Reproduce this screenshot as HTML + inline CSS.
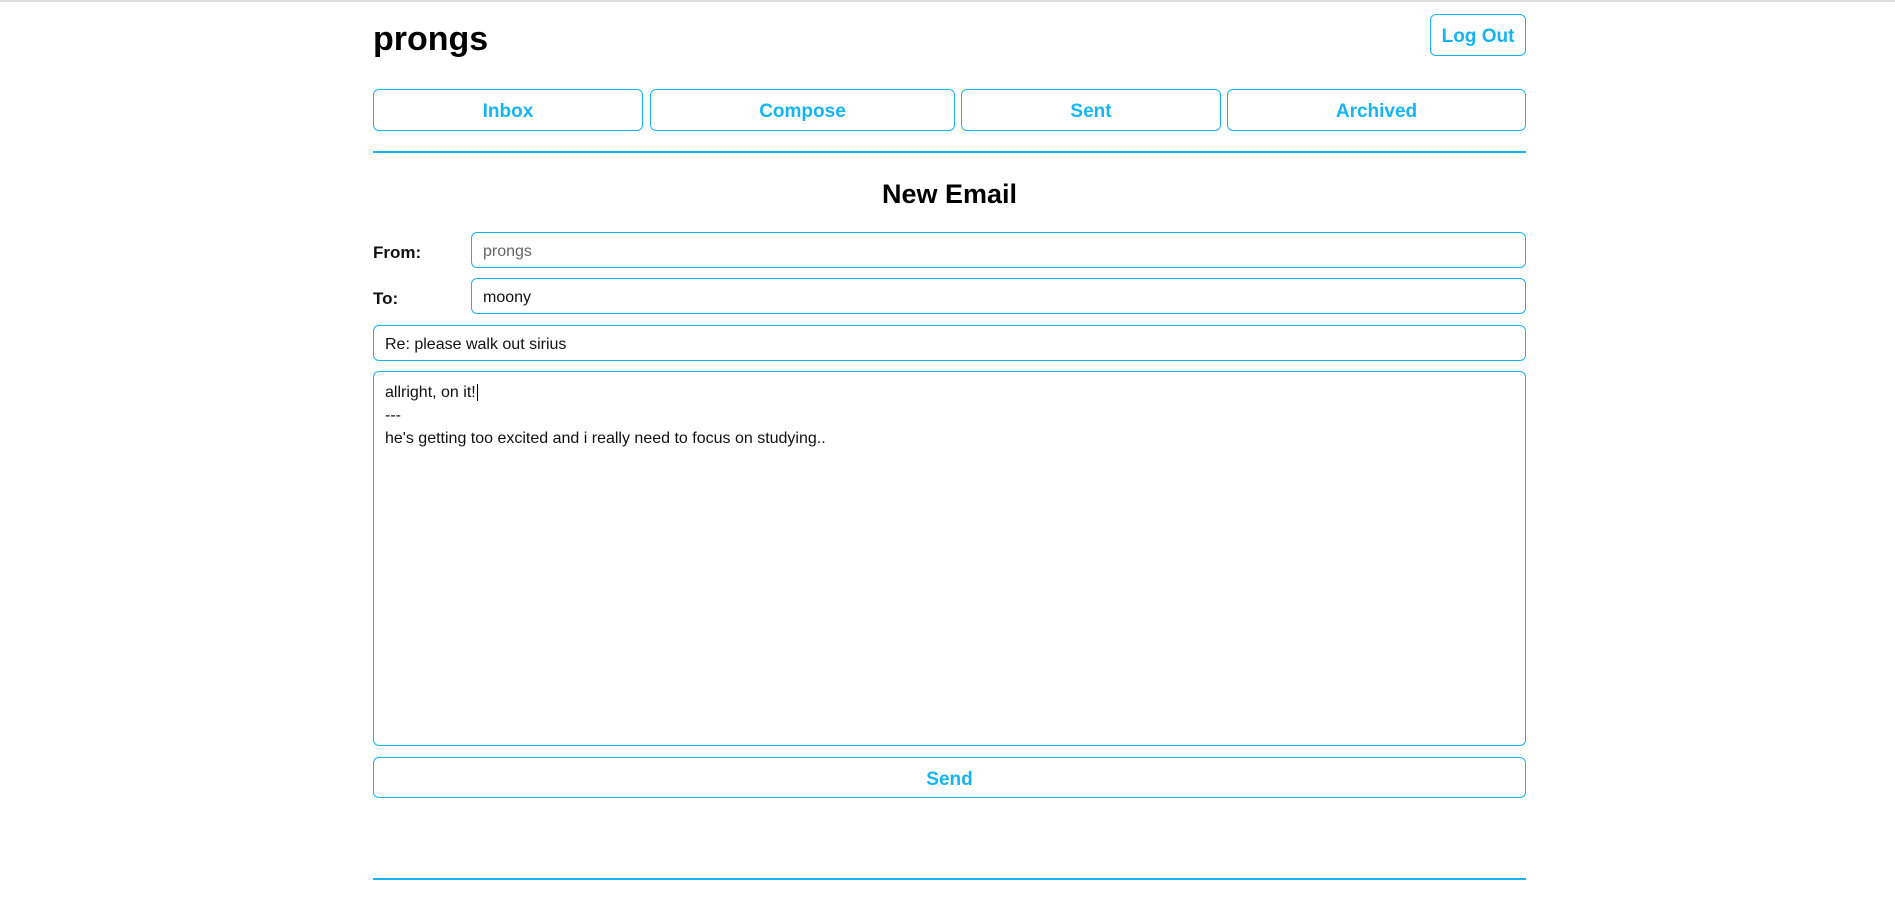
<!DOCTYPE html>
<html><head><style>
*{box-sizing:border-box;margin:0;padding:0}
body{width:1895px;height:900px;background:#fff;font-family:"Liberation Sans",sans-serif;position:relative;overflow:hidden}
.a{position:absolute}
.btn{position:absolute;border:1.5px solid #16b4f5;border-radius:6px;color:#16b4f5;font-size:19px;font-weight:bold;display:flex;align-items:center;justify-content:center;background:#fff;padding-top:4px}
.inp{position:absolute;border:1.5px solid #16b4f5;border-radius:6px;font-size:16px;padding-left:11px;padding-top:3px;display:flex;align-items:center;color:#111}
.lbl{position:absolute;font-size:17px;font-weight:bold;color:#111}
.hr{position:absolute;left:373px;width:1153px;height:1.5px;background:#16b4f5}
</style></head><body>
<div class="a" style="left:0;top:0;width:1895px;height:2px;background:#ddd"></div>
<div class="a" style="left:373px;top:20px;font-size:34px;font-weight:bold;color:#000">prongs</div>
<div class="btn" style="left:1430px;top:14px;width:96px;height:42px;font-size:19px">Log Out</div>
<div class="btn" style="left:373px;top:89px;width:270px;height:42px">Inbox</div>
<div class="btn" style="left:650px;top:89px;width:305px;height:42px">Compose</div>
<div class="btn" style="left:961px;top:89px;width:260px;height:42px">Sent</div>
<div class="btn" style="left:1227px;top:89px;width:299px;height:42px">Archived</div>
<div class="hr" style="top:151px"></div>
<div class="a" style="left:373px;width:1153px;top:179px;text-align:center;font-size:27px;font-weight:bold;color:#000">New Email</div>
<div class="lbl" style="left:373px;top:243px">From:</div>
<div class="inp" style="left:471px;top:232px;width:1055px;height:36px;color:#666">prongs</div>
<div class="lbl" style="left:373px;top:289px">To:</div>
<div class="inp" style="left:471px;top:278px;width:1055px;height:36px">moony</div>
<div class="inp" style="left:373px;top:325px;width:1153px;height:36px">Re: please walk out sirius</div>
<div class="inp" style="left:373px;top:371px;width:1153px;height:375px;padding-top:9px;line-height:23px;display:block">allright, on it!<span style="border-left:1px solid #000;margin-left:1px"></span><br>---<br>he's getting too excited and i really need to focus on studying..</div>
<div class="btn" style="left:373px;top:757px;width:1153px;height:41px">Send</div>
<div class="hr" style="top:878px"></div>
</body></html>
